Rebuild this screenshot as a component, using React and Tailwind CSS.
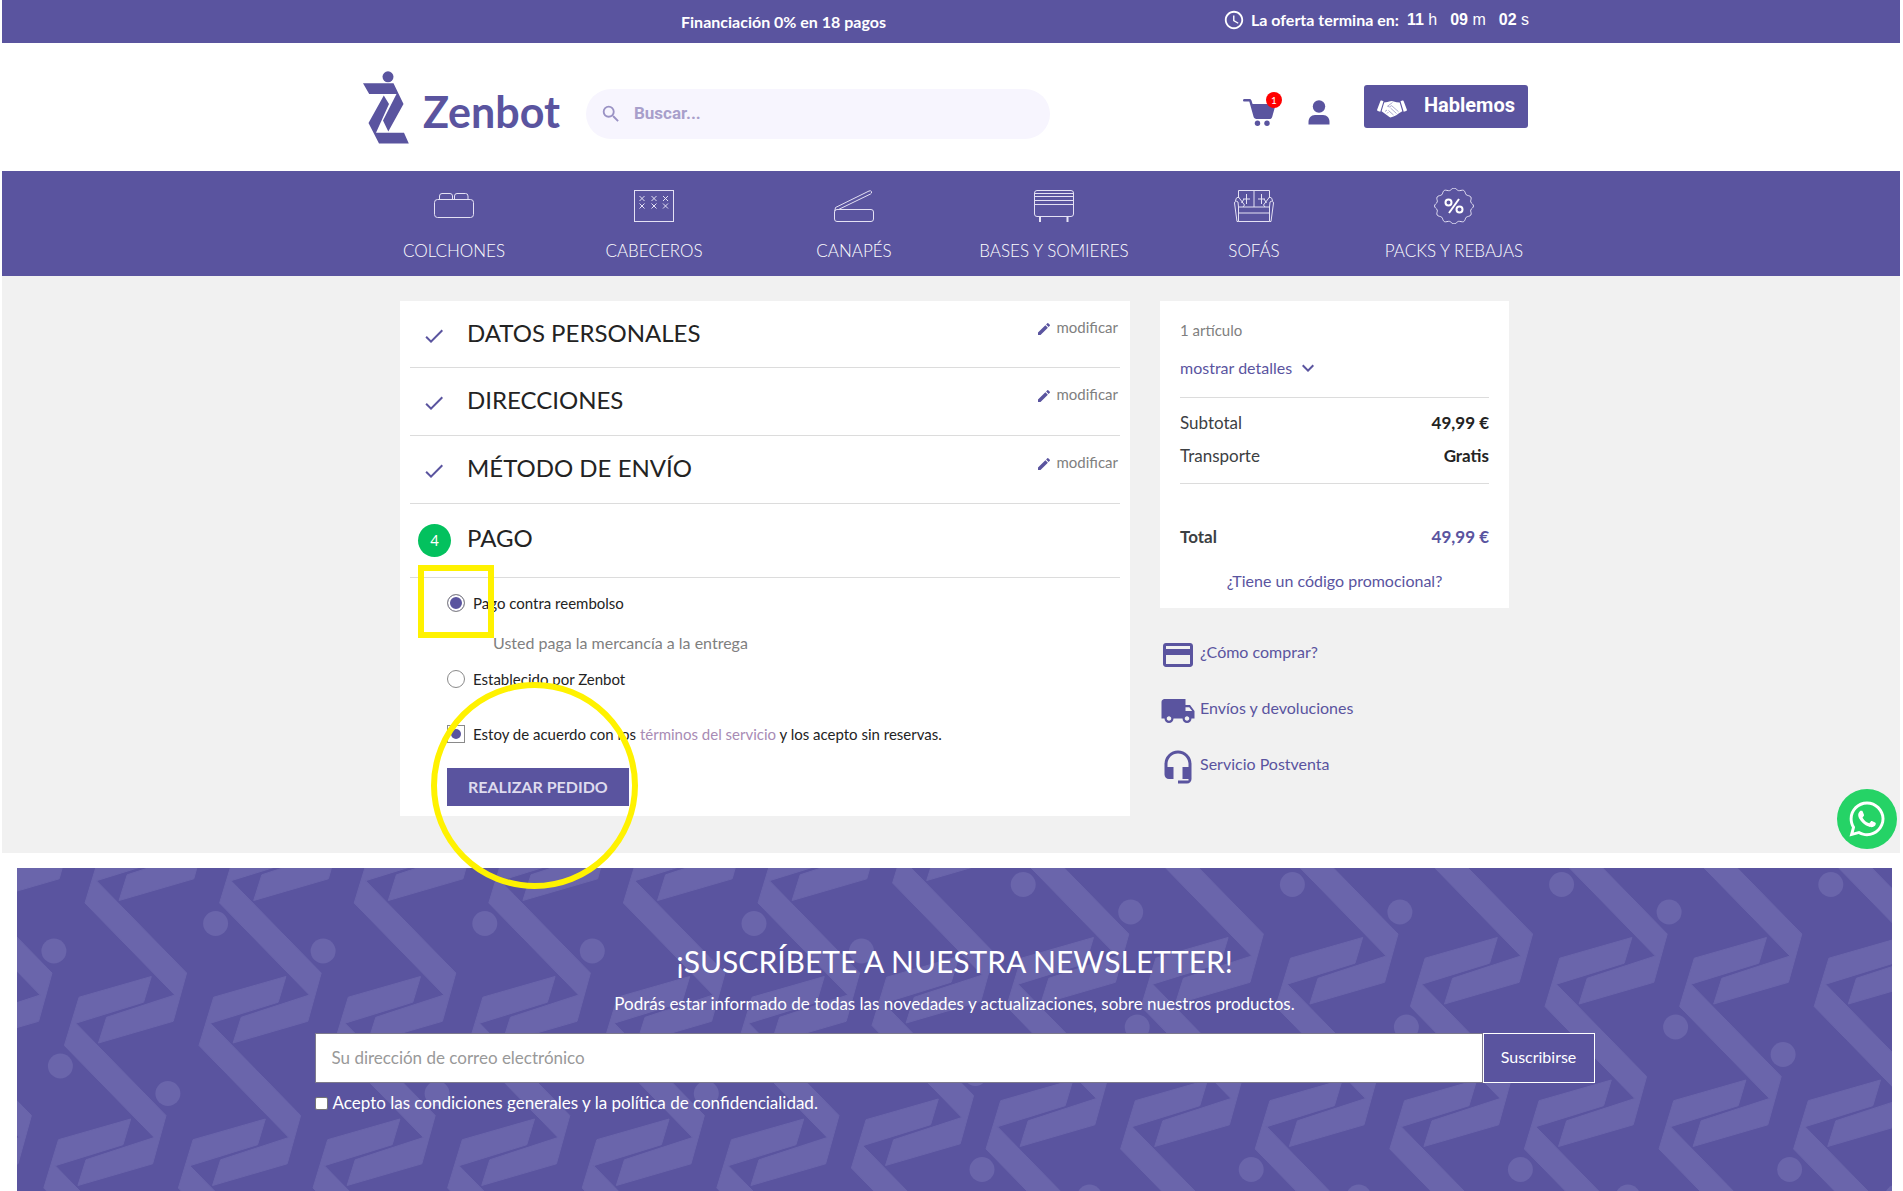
import React from 'react';
import {
    MdAccessTime,
    MdCheck,
    MdEdit,
    MdExpandMore,
    MdHeadsetMic,
    MdLocalShipping,
    MdPayment,
    MdSearch,
} from 'react-icons/md';
import { FaWhatsapp } from 'react-icons/fa';

function Logo() {
    return (
        <a href="#" aria-label="Zenbot" className="flex items-center gap-3.5 text-[#5a549f]">
            <svg width="46" height="73" viewBox="0 0 46 73" fill="currentColor">
                <circle cx="25" cy="5.800" r="5.500" />
                <path d="M0 12.300h30.500L40.500 33 25.300 60.500 20 49.500 33.500 23H6.200z" />
                <path d="M20.800 24.500L26 33 13 61.800h28L45.800 72.500H16L5.500 52z" />
            </svg>
            <span className="pt-2.5 text-[43px] leading-[48px] font-bold">Zenbot</span>
        </a>
    );
}

function CartIcon() {
    return (
        <svg width="34" height="28" viewBox="0 0 34 28" fill="#5a549f">
            <path d="M1 1h5.500c1 0 1.700.6 2 1.500L9.600 6H31c1 0 1.600.9 1.300 1.800l-3 10.700c-.3 1.500-1.300 2.500-2.800 2.500H13.500c-1.500 0-2.700-1-3-2.500L6.300 3.500H1C.2 3.500-.2 3 .1 2.200.2 1.500.5 1 1 1z" />
            <circle cx="14.500" cy="25.200" r="2.700" />
            <circle cx="24" cy="25.200" r="2.700" />
        </svg>
    );
}

function UserIcon() {
    return (
        <svg width="22" height="25" viewBox="0 0 22 25" fill="#5a549f">
            <circle cx="11" cy="6.500" r="6.200" />
            <path d="M.5 24.500v-2.500c0-4 2.500-7 6.500-7h8c4 0 6.500 3 6.500 7v2.500z" />
        </svg>
    );
}

function ManosIcon() {
    return (
        <svg width="30" height="18" viewBox="0 0 30 18" fill="#ffffff">
            <path d="M3.500.8q.5-.6 1.200-.3l1.800.7-3.200 10.600-2.500-.8q-.9-.3-.7-1.200z" />
            <path d="M26.500.8q-.5-.6-1.200-.3l-1.800.7 3.200 10.600 2.500-.8q.9-.3.7-1.200z" />
            <path d="M7.200 2.500q3.300-.3 6-1.200 1.800-.5 3.500.1 2.700 1 6 1.100l2.600 8.800-3.300 2-2.700 1.900-2.800 1.300-2.300.8q-1 .3-1.800-.4l-7.800-5.700z" />
            <path
                d="M15.500 2.500l-5 3.700q1.500 1.800 4.200-.5l6.800 6M13.500 8l6 5.500M11.500 10.500l5 4.500M8 11.500l2-1.500M10 13.500l1.500-1.500"
                fill="none"
                stroke="#5a549f"
                strokeWidth=".5"
            />
        </svg>
    );
}

const line = { fill: 'none', stroke: '#e4e1f4', strokeWidth: 1 };

function ColchonIcon() {
    return (
        <svg width="40" height="36" viewBox="0 0 40 36" {...line}>
            <rect x=".5" y="11.500" width="39" height="18" rx="3" />
            <path d="M5.500 11.500V8q0-2.500 2.500-2.500h8q2.500 0 2.500 2.500v3.500M20.500 11.500V8q0-2.500 2.500-2.500h8.500q2.500 0 2.500 2.500v3.500" />
        </svg>
    );
}

function CabeceroIcon() {
    const cruces = [8, 20, 31.5];
    return (
        <svg width="40" height="36" viewBox="0 0 40 36" {...line}>
            <rect x=".5" y="2.500" width="39" height="31" />
            {cruces.map((x) => (
                <path
                    key={x}
                    d={`M${x - 2.5} 8l5 5M${x + 2.5} 8l-5 5M${x - 2.5} 15.500l5 5M${x + 2.5} 15.500l-5 5`}
                />
            ))}
        </svg>
    );
}

function CanapeIcon() {
    return (
        <svg width="40" height="36" viewBox="0 0 40 36" {...line}>
            <rect x=".5" y="21.500" width="39" height="12" rx="2.500" />
            <path d="M.8 23L1.500 19.500 35 3q2-.8 2.500.7.500 1.500-1 2.300L4.500 21.500" />
        </svg>
    );
}

function BaseIcon() {
    return (
        <svg width="40" height="36" viewBox="0 0 40 36" {...line}>
            <rect x=".5" y="2.500" width="39" height="26" rx="2.500" />
            <path d="M1 5.500h38M1 8.500h38M1 12.500h38M1 16.500h38" />
            <path d="M6 28.500v5.500M33.500 28.500v5.500" strokeWidth="2" />
        </svg>
    );
}

function SofaIcon() {
    return (
        <svg width="40" height="36" viewBox="0 0 40 36" {...line}>
            <path d="M4.500 10V2.500h31V10M20 2.500v16.500M4.500 19h31M4.500 25h31M4.500 33.500h31M4.500 19v14.500M35.500 19v14.500" />
            <path d="M4.500 33.500H3L.5 15q.5-3 3.500-1l.5 5M35.500 33.500H37L39.500 15q-.5-3-3.500-1l-.5 5" />
            <path d="M1.500 13q0-3.500 3-4l6 8-1.500 2M38.500 13q0-3.500-3-4l-6 8 1.500 2M10 11l-2.500 4M30 11l2.500 4" />
            <path d="M12.500 6v10M9 11h7M27.500 6v10M24 11h7" />
        </svg>
    );
}

function RebajaIcon() {
    // Borde ondulado de doce puntas
    const puntos = Array.from({ length: 97 }, (_, i) => {
        const a = (i / 96) * Math.PI * 2;
        const r = 18.4 + Math.cos(a * 12) * 1.1;
        return `${(20 + r * Math.cos(a)).toFixed(2)},${(18 + r * 0.92 * Math.sin(a)).toFixed(2)}`;
    });
    return (
        <svg width="40" height="36" viewBox="0 0 40 36" {...line}>
            <polygon points={puntos.join(' ')} />
            <g stroke="#ffffff" strokeWidth="2">
                <circle cx="14.500" cy="14.500" r="3" />
                <circle cx="25.500" cy="21.500" r="3" />
                <path d="M25 11L15 25" />
            </g>
        </svg>
    );
}

// Trama de la marca para el fondo del boletín
function TramaZ() {
    const piezas = [];
    for (let k = -1; k <= 15; k++) {
        const base = k <= 5 ? 35 : k === 6 ? 15 : -4;
        for (let fila = -1; fila <= 2; fila++) {
            piezas.push({
                id: `${k}/${fila}`,
                x: 68 + 134.6 * k - 20.6 * fila,
                y: base + 142.5 * fila,
                puntos: Math.abs(k + fila) % 2 === 1,
            });
        }
    }
    return (
        <svg className="absolute inset-0 h-full w-full" fill="#6a65ab" strokeLinejoin="round">
            {piezas.map((p) => (
                <g key={p.id} transform={`translate(${p.x} ${p.y})`}>
                    <path
                        stroke="#6a65ab"
                        d="M14.700-48.300L86.900-69 79.200-43.300 11.400-22.300 101.600 70 88.200 118.300 13.500 140 21.600 114.300 89.800 92 0 0z"
                    />
                    {p.puntos && <circle cx="-4" cy="20.500" r="12.500" />}
                    {p.puntos && <circle cx="103.500" cy="48" r="12.500" />}
                </g>
            ))}
        </svg>
    );
}

const categorias = [
    { nombre: 'COLCHONES', icon: ColchonIcon },
    { nombre: 'CABECEROS', icon: CabeceroIcon },
    { nombre: 'CANAPÉS', icon: CanapeIcon },
    { nombre: 'BASES Y SOMIERES', icon: BaseIcon },
    { nombre: 'SOFÁS', icon: SofaIcon },
    { nombre: 'PACKS Y REBAJAS', icon: RebajaIcon },
];

const pasos = ['DATOS PERSONALES', 'DIRECCIONES', 'MÉTODO DE ENVÍO'];

const ayuda = [
    { texto: '¿Cómo comprar?', icon: MdPayment },
    { texto: 'Envíos y devoluciones', icon: MdLocalShipping },
    { texto: 'Servicio Postventa', icon: MdHeadsetMic },
];

function TopBar() {
    return (
        <div className="bg-[#5a549f] text-white">
            <div className="mx-auto flex h-[43px] max-w-[1200px] items-center justify-between pr-[22px] pl-[330px]">
                <p className="text-base font-bold">Financiación 0% en 18 pagos</p>
                <div className="flex items-center pb-[3px]">
                    <MdAccessTime size={22} />
                    <span className="ml-1.5 text-base font-bold">La oferta termina en:</span>
                    <div className="ml-2 flex gap-[13px] font-['Liberation_Sans',sans-serif] text-base">
                        <span><b>11</b> h</span>
                        <span><b>09</b> m</span>
                        <span><b>02</b> s</span>
                    </div>
                </div>
            </div>
        </div>
    );
}

function Header() {
    return (
        <header className="mx-auto flex h-32 max-w-[1200px] items-center pr-[23px] pl-3">
            <Logo />
            <label className="mt-3.5 ml-[26px] flex h-[50px] w-[464px] items-center rounded-full bg-[#f7f5fe] px-3.5">
                <MdSearch size={22} className="text-[#9a92c4]" />
                <input
                    type="text"
                    aria-label="Buscar"
                    placeholder="Buscar..."
                    className="ml-3 flex-1 bg-transparent font-[Roboto,sans-serif] text-[17px] font-bold outline-none placeholder:text-[#a89fcb]"
                />
            </label>
            <div className="ml-auto flex items-center">
                <a href="#" aria-label="Carrito" className="relative mt-2.5">
                    <CartIcon />
                    <span className="absolute -top-1.5 left-[23px] flex size-4 items-center justify-center rounded-full bg-[#ff0000] text-[10px] text-white">
                        1
                    </span>
                </a>
                <a href="#" aria-label="Mi cuenta" className="mt-2.5 ml-[31px]">
                    <UserIcon />
                </a>
                <button className="mb-0.5 ml-[34px] flex h-[43px] w-[164px] items-center justify-between rounded-[3px] bg-[#5a549f] px-[13px] pb-0.5 font-[Roboto,sans-serif] text-xl font-bold text-white">
                    <span className="mt-2">
                        <ManosIcon />
                    </span>
                    Hablemos
                </button>
            </div>
        </header>
    );
}

function Checkout() {
    return (
        <section className="relative w-[730px] bg-white px-2.5 pb-2.5">
            {pasos.map((paso) => (
                <div key={paso} className="flex h-[68px] border-b border-[#dcdcdc] pl-3 first:h-[67px]">
                    <MdCheck size={24} className="mt-[23px] text-[#5a549f]" />
                    <h1 className="ml-[21px] text-2xl leading-[64px] text-[#232323]">{paso}</h1>
                    <a href="#" className="mt-3 mr-0.5 ml-auto flex h-7 items-center gap-1 text-[15px] text-[#808080]">
                        <MdEdit size={16} className="mt-1 text-[#5a549f]" />
                        modificar
                    </a>
                </div>
            ))}
            <div className="flex h-[74px] items-center border-b border-[#dcdcdc] pl-2">
                <span className="flex size-[33px] items-center justify-center rounded-full bg-[#03c15e] text-[15px] text-white">4</span>
                <h1 className="ml-4 pb-1.5 text-2xl text-[#232323]">PAGO</h1>
            </div>

            <form className="pt-[11px] pl-[37px] text-[15px] leading-7 text-[#232323]" onSubmit={(e) => e.preventDefault()}>
                <label className="flex items-center gap-2">
                    <input
                        type="radio"
                        name="pago"
                        defaultChecked
                        className="size-[18px] appearance-none rounded-full border border-[#8a8a8a] bg-white checked:bg-[#5a549f] checked:shadow-[inset_0_0_0_2px_white]"
                    />
                    Pago contra reembolso
                </label>
                <p className="mt-3 pl-[46px] text-base leading-7 text-[#808080]">Usted paga la mercancía a la entrega</p>
                <label className="mt-2 flex items-center gap-2">
                    <input
                        type="radio"
                        name="pago"
                        className="size-[18px] appearance-none rounded-full border border-[#8a8a8a] bg-white checked:bg-[#5a549f] checked:shadow-[inset_0_0_0_2px_white]"
                    />
                    Establecido por Zenbot
                </label>
                <div className="mt-[27px] flex items-center gap-2">
                    <input
                        id="terminos"
                        type="checkbox"
                        defaultChecked
                        className="flex size-[18px] appearance-none items-center justify-center border border-[#8a8a8a] bg-white before:size-2.5 before:rounded-full before:content-[''] checked:before:bg-[#5a549f]"
                    />
                    <label htmlFor="terminos">
                        Estoy de acuerdo con los <a href="#" className="text-[#a88bb5]">términos del servicio</a> y los acepto sin reservas.
                    </label>
                </div>
                <button className="mt-5 h-[38px] bg-[#5a549f] px-[21px] text-base font-bold text-[#dedbee]">
                    REALIZAR PEDIDO
                </button>
            </form>

            {/* Marcas amarillas sobre la opción de pago y el botón */}
            <div className="pointer-events-none absolute top-[264px] left-[18px] z-10 h-[73px] w-[76px] border-[6px] border-[#fff200]" />
            <div className="pointer-events-none absolute top-[381px] left-[31px] z-10 size-[207px] rounded-full border-[6px] border-[#fff200]" />
        </section>
    );
}

function Resumen() {
    return (
        <aside className="w-[349px]">
            <div className="bg-white px-5 pt-[15px] pb-3 text-[17px]">
                <p className="text-[15px] leading-7 text-[#808080]">1 artículo</p>
                <a href="#" className="mt-2.5 flex items-center gap-1 text-base leading-7 text-[#5a549f]">
                    mostrar detalles <MdExpandMore size={24} />
                </a>
                <div className="mt-[15px] border-y border-[#dcdcdc] pt-2 pb-[11px] leading-[33px]">
                    <div className="flex justify-between text-[#3c4043]">
                        Subtotal <b className="text-[#232323]">49,99 €</b>
                    </div>
                    <div className="flex justify-between text-[#3c4043]">
                        Transporte <b className="text-[#232323]">Gratis</b>
                    </div>
                </div>
                <div className="mt-9 flex justify-between leading-[33px] font-bold text-[#3c4043]">
                    Total <span className="text-[#5a549f]">49,99 €</span>
                </div>
                <a href="#" className="mt-[13px] block text-center text-base leading-[30px] text-[#5a549f]">¿Tiene un código promocional?</a>
            </div>
            <ul className="mt-[29px] flex flex-col gap-5">
                {ayuda.map((item) => (
                    <li key={item.texto}>
                        <a href="#" className="flex h-9 items-start gap-1 text-base leading-[30px] text-[#5a549f]">
                            <item.icon size={36} />
                            {item.texto}
                        </a>
                    </li>
                ))}
            </ul>
        </aside>
    );
}

function Newsletter() {
    return (
        <section className="relative mt-[15px] mr-2 ml-[15px] h-[323px] overflow-hidden bg-[#5a549f] text-white">
            <TramaZ />
            <div className="relative mx-auto max-w-[1280px] pt-[70px]">
                <h2 className="text-center text-[30px] leading-[46px]">¡SUSCRÍBETE A NUESTRA NEWSLETTER!</h2>
                <p className="mt-1 text-center text-[17px] leading-8">
                    Podrás estar informado de todas las novedades y actualizaciones, sobre nuestros productos.
                </p>
                <form className="mt-[13px] flex h-[50px]" onSubmit={(e) => e.preventDefault()}>
                    <input
                        type="email"
                        aria-label="Correo electrónico"
                        placeholder="Su dirección de correo electrónico"
                        className="flex-1 border border-[#7d7a8c] bg-white px-4 text-[17px] text-[#232323] outline-none placeholder:text-[#999999]"
                    />
                    <button className="w-28 border border-white bg-[#5a549f] pb-0.5 text-base">Suscribirse</button>
                </form>
                <label className="mt-[5px] flex items-center gap-[5px] text-[17px] leading-[30px]">
                    <input type="checkbox" className="size-[13px] appearance-none rounded-xs border border-[#767676] bg-white" />
                    Acepto las condiciones generales y la política de confidencialidad.
                </label>
            </div>
        </section>
    );
}

export default function App() {
    return (
        <div className="mr-[3px] ml-0.5 bg-white font-[Lato,sans-serif]">
            <TopBar />
            <Header />
            <nav className="bg-[#5a549f]">
                <ul className="mx-auto grid h-[105px] max-w-[1206px] grid-cols-6 pl-1.5 text-center">
                    {categorias.map((cat) => (
                        <li key={cat.nombre}>
                            <a href="#" className="flex flex-col items-center pt-[17px] text-[17px] leading-8 font-light text-white">
                                <cat.icon />
                                <span className="mt-[11px]">{cat.nombre}</span>
                            </a>
                        </li>
                    ))}
                </ul>
            </nav>
            <main className="bg-[#f1f1f1] pt-[25px] pb-[37px]">
                <div className="mx-auto flex max-w-[1116px] items-start gap-[30px] pl-[7px]">
                    <Checkout />
                    <Resumen />
                </div>
            </main>
            <Newsletter />
            <a
                href="#"
                aria-label="WhatsApp"
                className="fixed right-1.5 bottom-[342px] z-20 flex size-[60px] items-center justify-center rounded-full bg-[#25d366] text-white"
            >
                <FaWhatsapp size={40} />
            </a>
        </div>
    );
}
